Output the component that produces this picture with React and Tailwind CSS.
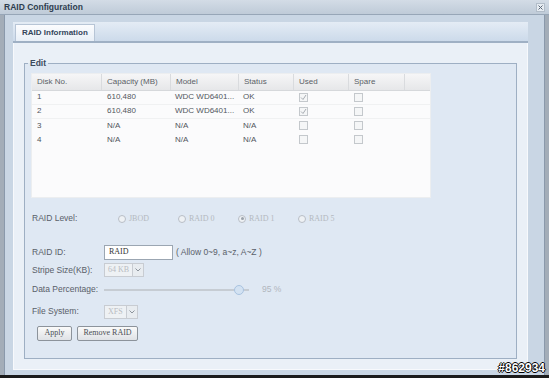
import React from "react";

const disks = [
  { no: "1", cap: "610,480", model: "WDC WD6401...", status: "OK", used: true },
  { no: "2", cap: "610,480", model: "WDC WD6401...", status: "OK", used: true },
  { no: "3", cap: "N/A", model: "N/A", status: "N/A", used: false },
  { no: "4", cap: "N/A", model: "N/A", status: "N/A", used: false },
];

const cols = [
  { label: "Disk No.", w: "w-[70px]" },
  { label: "Capacity (MB)", w: "w-[69px]" },
  { label: "Model", w: "w-[68px]" },
  { label: "Status", w: "w-[55px]" },
  { label: "Used", w: "w-[55px]" },
  { label: "Spare", w: "w-[56px]" },
];

function Check({ checked }) {
  return (
    <span className="w-[9px] h-[9px] border border-[#c4c8cc] bg-[#f5f6f7] flex items-center justify-center">
      {checked && (
        <svg width="7" height="7" viewBox="0 0 7 7">
          <path d="M1 3.5 L3 5.5 L6 1" fill="none" stroke="#a8adb3" strokeWidth="1" />
        </svg>
      )}
    </span>
  );
}

function Radio({ label, on }) {
  return (
    <div className="w-[60px] flex items-center gap-[3px]">
      <span className="w-[8px] h-[8px] rounded-full border border-[#b8bec6] bg-[#eef1f4] flex items-center justify-center">
        {on && <span className="w-[3px] h-[3px] rounded-full bg-[#9aa2ab]" />}
      </span>
      <span className="text-[#b4b9c0] font-['Liberation_Serif',serif] text-[8px]">{label}</span>
    </div>
  );
}

function Select({ value, w }) {
  return (
    <div className="flex h-[14px]">
      <div className={`${w} border border-[#c8ccd2] bg-[#eef1f4] text-[#b8bcc2] font-['Liberation_Serif',serif] text-[8px] flex items-center pl-[3px]`}>
        {value}
      </div>
      <div className="w-[11px] border border-l-0 border-[#c8ccd2] bg-[#e8ecf0] flex items-center justify-center">
        <svg width="6" height="4" viewBox="0 0 6 4">
          <path d="M0.5 0.5 L3 3 L5.5 0.5" fill="none" stroke="#8d949c" strokeWidth="1" />
        </svg>
      </div>
    </div>
  );
}

export default function App() {
  return (
    <div className="w-[549px] h-[378px] bg-[#a3adb8] flex flex-col overflow-hidden relative font-['Liberation_Sans',Arial,sans-serif]">
      {/* Title bar */}
      <div className="h-[15px] flex items-center justify-between pl-[4px] pr-[4px] bg-gradient-to-b from-[#d3dce6] to-[#bfcbd8] border-b border-[#97a6b7]">
        <span className="text-[8.5px] font-bold text-[#2e3d4f]">RAID Configuration</span>
        <span className="w-[9px] h-[9px] border border-[#b2bdc9] bg-[#e6ecf2] flex items-center justify-center">
          <svg width="5" height="5" viewBox="0 0 5 5">
            <path d="M0.5 0.5 L4.5 4.5 M4.5 0.5 L0.5 4.5" stroke="#5c6878" strokeWidth="1" />
          </svg>
        </span>
      </div>

      {/* Window body */}
      <div className="flex-1 flex px-[4px]">
        <div className="flex-1 flex flex-col border-x border-[#8a99ab] bg-[#c9d6e4] pl-[8px] pr-[16px] pt-[7px] pb-[5px]">
          {/* Tab strip */}
          <div className="h-[21px] flex items-end px-[2px] bg-gradient-to-b from-[#e4ecf5] to-[#ccdaea] border-b-2 border-[#9fb0c4]">
            <div className="h-[17px] px-[6px] flex items-center bg-gradient-to-b from-[#fbfcfe] to-[#e8eff7] border border-b-0 border-[#b7c5d6] text-[8px] font-bold text-[#34465c]">
              RAID Information
            </div>
          </div>

          {/* Content panel */}
          <div className="flex-1 flex bg-[#eaf0f7] border-x border-b border-[#f7f9fc] px-[10px] pt-[16px] pb-[10px]">
            <fieldset className="flex-1 flex flex-col border border-[#9eafc3] bg-[#dfe8f3] px-[6px] pt-[5px]">
              <legend className="ml-[-3px] px-[2px] text-[8.5px] font-bold text-[#3b4a5c] leading-none">Edit</legend>

              {/* Disk table */}
              <div className="w-[400px] h-[125px] bg-[#fbfbfc] border border-[#eceef0]">
                <div className="h-[17px] flex bg-gradient-to-b from-[#f6f6f7] to-[#e6e7e9] border-b border-[#d6d8db]">
                  {cols.map((c) => (
                    <div key={c.label} className={`${c.w} border-r border-[#d9dbde] pl-[5px] flex items-center text-[8px] text-[#5a5f66]`}>
                      {c.label}
                    </div>
                  ))}
                </div>
                {disks.map((d, i) => (
                  <div key={d.no} className={`h-[14px] flex text-[8px] text-[#51565c] ${i < 2 ? "border-b border-[#f0f1f2]" : ""}`}>
                    <div className="w-[70px] pl-[5px] flex items-center">{d.no}</div>
                    <div className="w-[69px] pl-[5px] flex items-center">{d.cap}</div>
                    <div className="w-[68px] pl-[4px] flex items-center">{d.model}</div>
                    <div className="w-[55px] pl-[4px] flex items-center">{d.status}</div>
                    <div className="w-[55px] pl-[5px] flex items-center"><Check checked={d.used} /></div>
                    <div className="w-[56px] pl-[5px] flex items-center"><Check checked={false} /></div>
                  </div>
                ))}
              </div>

              {/* RAID level */}
              <div className="mt-[14px] h-[14px] flex items-center pl-[1px]">
                <span className="w-[86px] text-[8.5px] text-[#596069]">RAID Level:</span>
                <Radio label="JBOD" />
                <Radio label="RAID 0" />
                <Radio label="RAID 1" on />
                <Radio label="RAID 5" />
              </div>

              {/* Form */}
              <div className="mt-[19px] flex flex-col gap-[3px] pl-[1px] text-[8.5px] text-[#596069]">
                <div className="h-[15px] flex items-center">
                  <span className="w-[72px]">RAID ID:</span>
                  <div className="w-[69px] h-[15px] border border-[#9ba6b2] bg-white flex items-center pl-[4px] font-['Liberation_Serif',serif] text-[8px] text-[#333]">
                    RAID
                  </div>
                  <span className="ml-[3px]">( Allow 0~9, a~z, A~Z )</span>
                </div>
                <div className="h-[15px] flex items-center">
                  <span className="w-[72px]">Stripe Size(KB):</span>
                  <Select value="64 KB" w="w-[29px]" />
                </div>
                <div className="h-[18px] flex items-center">
                  <span className="w-[72px]">Data Percentage:</span>
                  <div className="w-[145px] h-[10px] relative flex items-center">
                    <div className="flex-1 h-[2px] bg-[#c6ccd3]" />
                    <div className="absolute left-[130px] w-[10px] h-[10px] rounded-full border border-[#a9c3e0] bg-[#d3e2f2]" />
                  </div>
                  <span className="ml-[13px] text-[#b1b6bd]">95 %</span>
                </div>
                <div className="mt-[1px] h-[18px] flex items-center">
                  <span className="w-[72px]">File System:</span>
                  <Select value="XFS" w="w-[23px]" />
                </div>
              </div>

              {/* Buttons */}
              <div className="mt-[5px] flex gap-[5px] pl-[6px]">
                <button className="w-[35px] h-[15px] rounded-[2px] border border-[#8c939b] bg-gradient-to-b from-[#fafafa] to-[#dfe2e6] font-['Liberation_Serif',serif] text-[8px] text-[#4a4f55]">
                  Apply
                </button>
                <button className="w-[61px] h-[15px] rounded-[2px] border border-[#8c939b] bg-gradient-to-b from-[#fafafa] to-[#dfe2e6] font-['Liberation_Serif',serif] text-[8px] text-[#4a4f55]">
                  Remove RAID
                </button>
              </div>
            </fieldset>
          </div>
        </div>
      </div>
      <div className="h-[3px] bg-[#1b1b1b]" />

      {/* Watermark */}
      <span className="absolute right-[4px] bottom-[4px] text-[12px] font-bold text-white leading-none [text-shadow:1px_0_0_#000,-1px_0_0_#000,0_1px_0_#000,0_-1px_0_#000]">
        #862934
      </span>
    </div>
  );
}
